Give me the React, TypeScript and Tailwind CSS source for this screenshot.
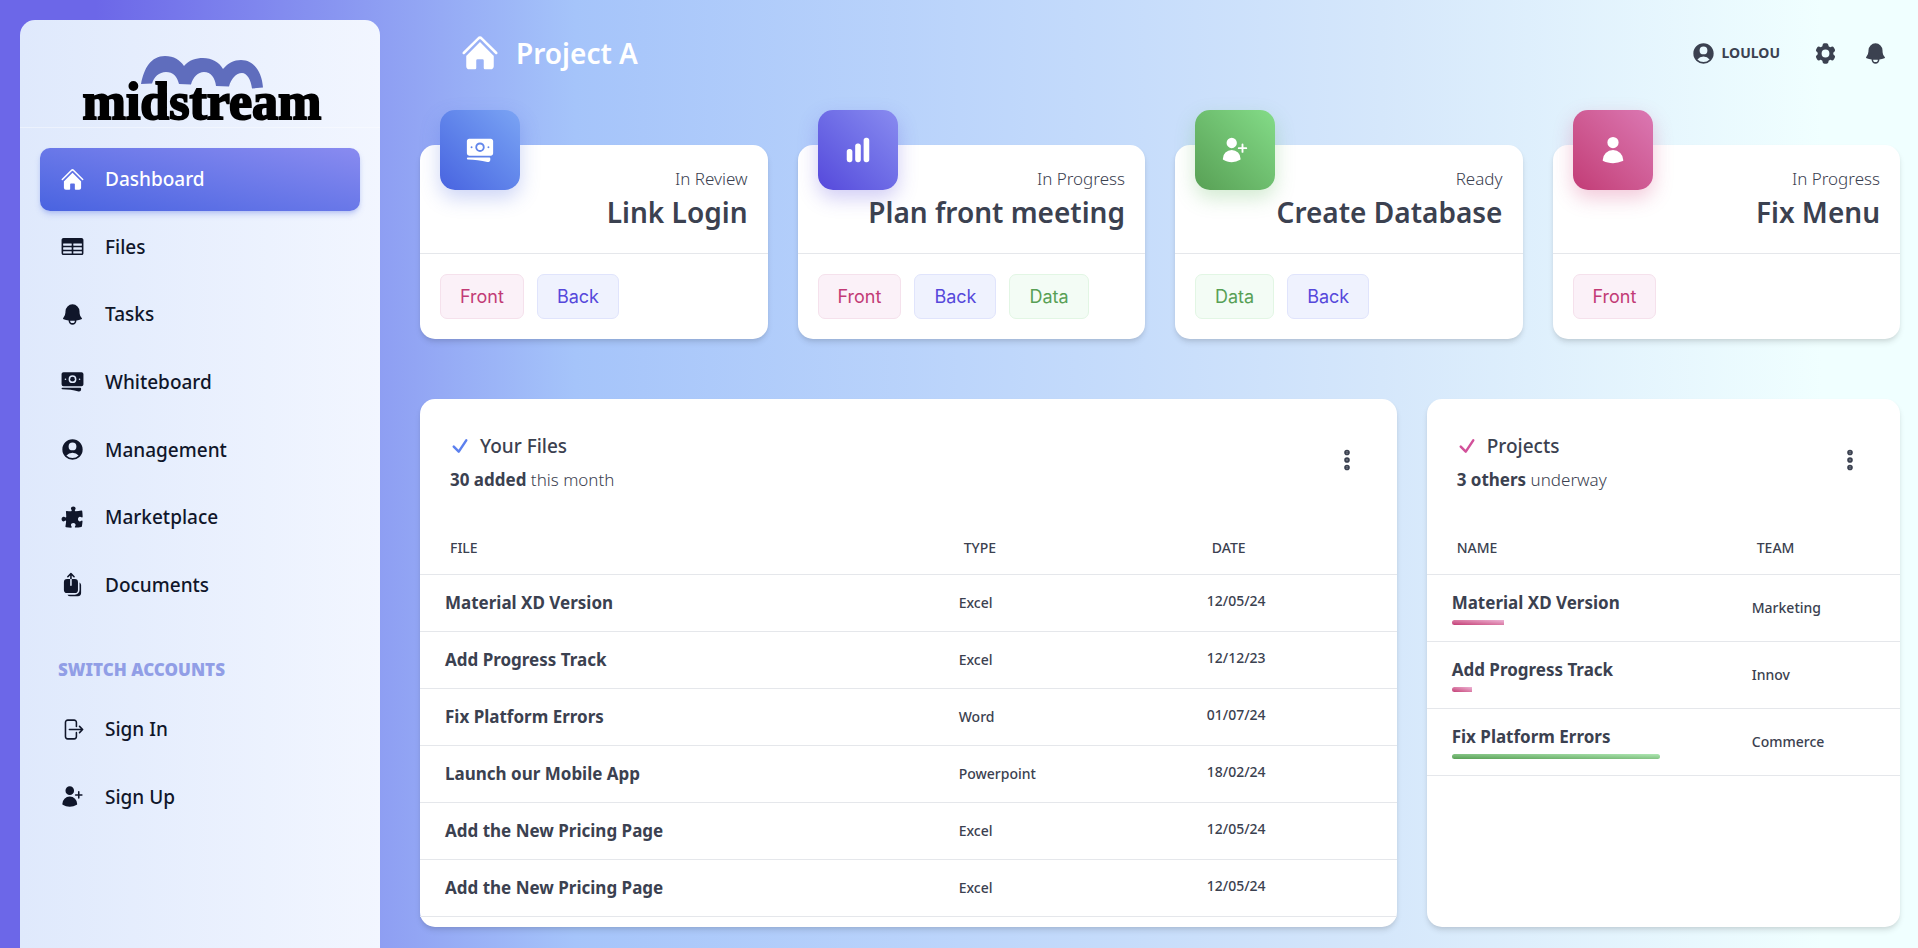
import type { ComponentType } from 'react';
import {
  HiArrowUpOnSquareStack,
  HiBanknotes,
  HiBell,
  HiChartBar,
  HiCog6Tooth,
  HiHome,
  HiOutlineArrowRightOnRectangle,
  HiPuzzlePiece,
  HiTableCells,
  HiUser,
  HiUserCircle,
  HiUserPlus,
} from 'react-icons/hi2';

type Icon = ComponentType<{ className?: string }>;
type TagName = 'Front' | 'Back' | 'Data';

const mainNav: { label: string; icon: Icon; active?: boolean }[] = [
  { label: 'Dashboard', icon: HiHome, active: true },
  { label: 'Files', icon: HiTableCells },
  { label: 'Tasks', icon: HiBell },
  { label: 'Whiteboard', icon: HiBanknotes },
  { label: 'Management', icon: HiUserCircle },
  { label: 'Marketplace', icon: HiPuzzlePiece },
  { label: 'Documents', icon: HiArrowUpOnSquareStack },
];

const accountNav: { label: string; icon: Icon; active?: boolean }[] = [
  { label: 'Sign In', icon: HiOutlineArrowRightOnRectangle },
  { label: 'Sign Up', icon: HiUserPlus },
];

const tasks: { status: string; title: string; icon: Icon; tone: string; tags: TagName[] }[] = [
  {
    status: 'In Review',
    title: 'Link Login',
    icon: HiBanknotes,
    tone: 'from-[#4963e0] to-[#7ba4f4] shadow-[0_8px_20px_rgba(73,99,224,0.28)]',
    tags: ['Front', 'Back'],
  },
  {
    status: 'In Progress',
    title: 'Plan front meeting',
    icon: HiChartBar,
    tone: 'from-[#5648db] to-[#898bf0] shadow-[0_8px_20px_rgba(86,72,219,0.28)]',
    tags: ['Front', 'Back', 'Data'],
  },
  {
    status: 'Ready',
    title: 'Create Database',
    icon: HiUserPlus,
    tone: 'from-[#58a055] to-[#84dc88] shadow-[0_8px_20px_rgba(88,180,85,0.28)]',
    tags: ['Data', 'Back'],
  },
  {
    status: 'In Progress',
    title: 'Fix Menu',
    icon: HiUser,
    tone: 'from-[#c23b76] to-[#db78b3] shadow-[0_8px_20px_rgba(210,59,118,0.28)]',
    tags: ['Front'],
  },
];

const tagTone: Record<TagName, string> = {
  Front: 'border-[#f5e1ec] bg-[#fbf1f8] text-[#c23b76]',
  Back: 'border-[#e0e4fc] bg-[#eff2fe] text-[#5648db]',
  Data: 'border-[#e2f6e4] bg-[#f3fcf5] text-[#58a055]',
};

const files = [
  { name: 'Material XD Version', type: 'Excel', date: '12/05/24' },
  { name: 'Add Progress Track', type: 'Excel', date: '12/12/23' },
  { name: 'Fix Platform Errors', type: 'Word', date: '01/07/24' },
  { name: 'Launch our Mobile App', type: 'Powerpoint', date: '18/02/24' },
  { name: 'Add the New Pricing Page', type: 'Excel', date: '12/05/24' },
  { name: 'Add the New Pricing Page', type: 'Excel', date: '12/05/24' },
];

const projects = [
  { name: 'Material XD Version', team: 'Marketing', progress: 25 },
  { name: 'Add Progress Track', team: 'Innov', progress: 10 },
  { name: 'Fix Platform Errors', team: 'Commerce', progress: 100 },
];

const cardShadow = 'shadow-[0_4px_6px_-1px_rgba(0,0,0,0.12),0_2px_4px_-1px_rgba(0,0,0,0.06)]';

function Logo() {
  return (
    <div className="flex flex-col items-center pt-9 pl-1">
      <svg viewBox="0 0 124 34" className="h-[34px] w-[124px]" aria-hidden="true">
        <path
          fill="#5f6dbd"
          d="M1 28C4 12 11 0 25 0C34 0 40 4 44 10C49 4 56 2 63 2C72 2 79 6 83 13C88 7 94 4 101 4C114 4 122 16 123 31.500L112 32.500C111 24 107 17 102 17C96 17 91 23 89 30.500L76 30C75 22 71 16 64 16C58 16 53 21 51 28.500L39 28C37 20 33 16 26 16C19 16 14 21 12 27.500Z"
        />
      </svg>
      <span className="-mt-[13px] font-['Liberation_Serif',serif] text-[52px] leading-[50px] font-bold text-black [-webkit-text-stroke:2px_black]">
        midstream
      </span>
    </div>
  );
}

function NavItem({ label, icon: ItemIcon, active }: { label: string; icon: Icon; active?: boolean }) {
  return (
    <li className="flex">
      <a
        href="#"
        className={
          active
            ? 'flex flex-1 items-center gap-5 rounded-[10px] bg-linear-to-tr from-[#4963e0] to-[#898bf0] px-5 text-white shadow-md shadow-[#4963e0]/25'
            : 'flex flex-1 items-center gap-5 rounded-[10px] px-5 text-[#10162a]'
        }
      >
        <ItemIcon className="size-[25px]" />
        <span className="text-[19px] leading-7 font-medium">{label}</span>
      </a>
    </li>
  );
}

function Sidebar() {
  return (
    <aside className="w-[360px] shrink-0 rounded-t-[15px] bg-linear-to-r from-[#dfe9fc] to-[#f2f6ff]">
      <div className="h-[108px] border-b border-white/40">
        <Logo />
      </div>
      <nav className="px-5 pt-5" aria-label="Main">
        <ul className="grid min-h-[468px] auto-rows-fr gap-[5px]">
          {mainNav.map((item) => (
            <NavItem key={item.label} {...item} />
          ))}
        </ul>
        <h2 className="mt-10 mb-[14px] px-[18px] text-[17px] leading-7 font-black text-[#919ee6] uppercase">
          Switch accounts
        </h2>
        <ul className="grid min-h-[130px] auto-rows-fr gap-[5px]">
          {accountNav.map((item) => (
            <NavItem key={item.label} {...item} />
          ))}
        </ul>
      </nav>
    </aside>
  );
}

function Header() {
  return (
    <header className="flex h-[106px] items-center justify-between pl-10">
      <div className="flex items-center gap-4 text-white">
        <HiHome className="size-10" />
        <h1 className="text-[28px] leading-9 font-semibold">Project A</h1>
      </div>
      <div className="flex items-center text-[#3b4150]">
        <button type="button" className="flex items-center gap-1.5 px-5">
          <HiUserCircle className="size-[25px]" />
          <span className="text-[14px] leading-6 font-bold">LOULOU</span>
        </button>
        <button type="button" aria-label="Settings" className="grid size-[50px] place-items-center">
          <HiCog6Tooth className="size-[25px]" />
        </button>
        <button type="button" aria-label="Notifications" className="grid size-[50px] place-items-center">
          <HiBell className="size-[25px]" />
        </button>
      </div>
    </header>
  );
}

function TaskCard({ status, title, icon: TaskIcon, tone, tags }: (typeof tasks)[number]) {
  return (
    <article className={`relative rounded-[15px] bg-white ${cardShadow}`}>
      <div
        className={`absolute -top-[35px] left-5 grid size-20 place-items-center rounded-[15px] bg-linear-to-tr text-white ${tone}`}
      >
        <TaskIcon className="size-[30px]" />
      </div>
      <div className="relative px-5 pt-5 pb-[22px] text-right">
        <p className="text-[17px] leading-7 font-light">{status}</p>
        <h2 className="text-[28px] leading-[38px] font-semibold">{title}</h2>
      </div>
      <ul className="flex gap-[13px] border-t border-[#e5e7eb] p-5">
        {tags.map((tag) => (
          <li
            key={tag}
            className={`rounded-[7px] border px-[19px] py-2 font-['Inter',sans-serif] text-[18px] leading-[27px] ${tagTone[tag]}`}
          >
            {tag}
          </li>
        ))}
      </ul>
    </article>
  );
}

function PanelHeader({ title, count, rest, tone }: { title: string; count: string; rest: string; tone: string }) {
  return (
    <div className="flex items-start justify-between px-[30px] pt-[30px] pb-[26px]">
      <div>
        <h2 className="flex items-center gap-2.5 text-[19px] leading-[34px] font-medium">
          <svg viewBox="0 0 24 24" className={`size-5 ${tone}`} fill="none" stroke="currentColor" strokeWidth="3" strokeLinecap="round" strokeLinejoin="round" aria-hidden="true">
            <path d="M4.500 12.750l6 6 9-13.500" />
          </svg>
          {title}
        </h2>
        <p className="text-[17px] leading-[34px] font-light">
          <strong className="font-bold">{count}</strong> {rest}
        </p>
      </div>
      <button type="button" aria-label={`${title} options`} className="grid h-[62px] w-10 place-items-center">
        <svg viewBox="0 0 24 24" className="size-[30px]" fill="currentColor" stroke="currentColor" strokeWidth="3" aria-hidden="true">
          <path d="M12 6.750a.75.75 0 110-1.500.75.75 0 010 1.500zM12 12.750a.75.75 0 110-1.500.75.75 0 010 1.500zM12 18.750a.75.75 0 110-1.500.75.75 0 010 1.500z" />
        </svg>
      </button>
    </div>
  );
}

function FilesPanel() {
  return (
    <section className={`rounded-[15px] bg-white pb-2.5 lg:col-span-2 ${cardShadow}`}>
      <PanelHeader title="Your Files" count="30 added" rest="this month" tone="text-[#5c80ee]" />
      <table className="w-full table-fixed text-left">
        <thead>
          <tr className="h-[51px] border-b border-[#e5e7eb] text-[14px] leading-5">
            <th className="w-[52.6%] px-[30px] font-medium">FILE</th>
            <th className="w-[25.4%] px-[30px] font-medium">TYPE</th>
            <th className="px-[30px] font-medium">DATE</th>
          </tr>
        </thead>
        <tbody>
          {files.map((file, index) => (
            <tr key={index} className="h-[57px] border-b border-[#e5e7eb]">
              <td className="px-[25px] text-[17px] leading-6 font-bold">{file.name}</td>
              <td className="px-[25px] text-[14px] leading-6 font-medium">{file.type}</td>
              <td className="px-[25px] pb-1 text-[14px] leading-6 font-medium">{file.date}</td>
            </tr>
          ))}
        </tbody>
      </table>
    </section>
  );
}

function ProjectsPanel() {
  return (
    <section className={`rounded-[15px] bg-white ${cardShadow}`}>
      <PanelHeader title="Projects" count="3 others" rest="underway" tone="text-[#d2519a]" />
      <table className="w-full table-fixed text-left">
        <thead>
          <tr className="h-[51px] border-b border-[#e5e7eb] text-[14px] leading-5">
            <th className="w-[63.4%] px-[30px] font-medium">NAME</th>
            <th className="px-[30px] font-medium">TEAM</th>
          </tr>
        </thead>
        <tbody>
          {projects.map((project) => (
            <tr key={project.name} className="h-[67px] border-b border-[#e5e7eb]">
              <td className="px-[25px] text-[17px] leading-6 font-bold">
                {project.name}
                <div
                  className="mt-[5px] h-[5px] w-10/12 overflow-hidden rounded-full"
                  role="progressbar"
                  aria-label={project.name}
                  aria-valuenow={project.progress}
                >
                  <div
                    className={
                      project.progress === 100
                        ? 'h-full bg-linear-to-tr from-[#58a055] to-[#b0e8b4]'
                        : 'h-full bg-linear-to-tr from-[#c23b76] to-[#ecb4d6]'
                    }
                    style={{ width: `${project.progress}%` }}
                  />
                </div>
              </td>
              <td className="px-[25px] text-[14px] leading-6 font-medium">{project.team}</td>
            </tr>
          ))}
        </tbody>
      </table>
    </section>
  );
}

export default function App() {
  return (
    <div className="flex min-h-screen bg-[linear-gradient(90deg,#6c67e8_0%,#6c67e8_5%,#a5c4fa_30%,#bcd5fb_50%,#d5e7fb_72%,#f0ffff_95%)] pl-5 font-['Noto_Sans','Open_Sans',sans-serif] text-[#3b4150]">
      <div className="flex pt-5">
        <Sidebar />
      </div>
      <main className="min-w-0 flex-1 pr-[18px] pb-5 pl-10">
        <Header />
        <div className="mt-[39px] grid grid-cols-1 gap-x-[30px] gap-y-16 md:grid-cols-2 xl:grid-cols-4">
          {tasks.map((task) => (
            <TaskCard key={task.title} {...task} />
          ))}
        </div>
        <div className="mt-[60px] grid grid-cols-1 gap-[30px] lg:grid-cols-3">
          <FilesPanel />
          <ProjectsPanel />
        </div>
      </main>
    </div>
  );
}
